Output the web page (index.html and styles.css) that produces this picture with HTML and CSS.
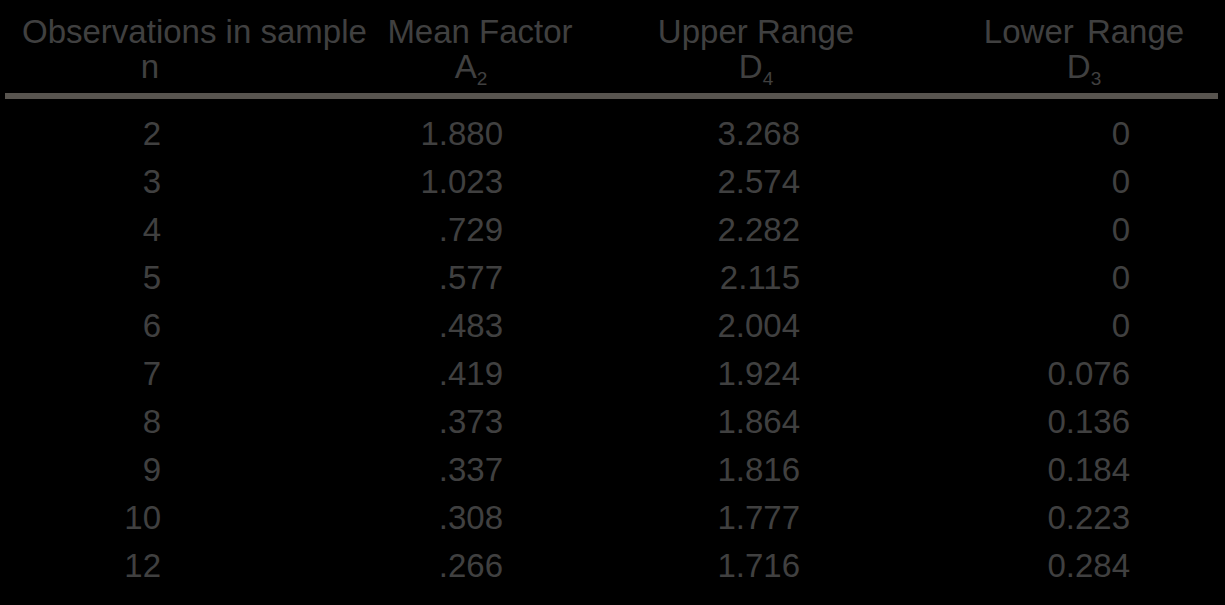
FILE: index.html
```html
<!DOCTYPE html>
<html>
<head>
<meta charset="utf-8">
<link rel="stylesheet" href="styles.css">
</head>
<body>
<div class="table">
  <div class="head">
    <div class="row hrow">
      <div class="cell c1 left"><span>Observations in sample</span></div>
      <div class="cell c2"><span>Mean Factor</span></div>
      <div class="cell c3"><span>Upper Range</span></div>
      <div class="cell c4"><span class="wide">Lower Range</span></div>
    </div>
    <div class="row hrow">
      <div class="cell c1"><span>n</span></div>
      <div class="cell c2 sym"><span>A<sub>2</sub></span></div>
      <div class="cell c3"><span>D<sub>4</sub></span></div>
      <div class="cell c4"><span>D<sub>3</sub></span></div>
    </div>
  </div>
  <div class="rule"></div>
  <div class="body">
    <div class="row drow"><div class="d d1">2</div><div class="d d2">1.880</div><div class="d d3">3.268</div><div class="d d4">0</div></div>
    <div class="row drow"><div class="d d1">3</div><div class="d d2">1.023</div><div class="d d3">2.574</div><div class="d d4">0</div></div>
    <div class="row drow"><div class="d d1">4</div><div class="d d2">.729</div><div class="d d3">2.282</div><div class="d d4">0</div></div>
    <div class="row drow"><div class="d d1">5</div><div class="d d2">.577</div><div class="d d3">2.115</div><div class="d d4">0</div></div>
    <div class="row drow"><div class="d d1">6</div><div class="d d2">.483</div><div class="d d3">2.004</div><div class="d d4">0</div></div>
    <div class="row drow"><div class="d d1">7</div><div class="d d2">.419</div><div class="d d3">1.924</div><div class="d d4">0.076</div></div>
    <div class="row drow"><div class="d d1">8</div><div class="d d2">.373</div><div class="d d3">1.864</div><div class="d d4">0.136</div></div>
    <div class="row drow"><div class="d d1">9</div><div class="d d2">.337</div><div class="d d3">1.816</div><div class="d d4">0.184</div></div>
    <div class="row drow"><div class="d d1">10</div><div class="d d2">.308</div><div class="d d3">1.777</div><div class="d d4">0.223</div></div>
    <div class="row drow"><div class="d d1">12</div><div class="d d2">.266</div><div class="d d3">1.716</div><div class="d d4">0.284</div></div>
  </div>
</div>
</body>
</html>
```
FILE: styles.css
```css
html, body {
  margin: 0;
  padding: 0;
  background: #000;
  overflow: hidden;
}
body {
  width: 1225px;
  height: 605px;
  font-family: "Liberation Sans", Arial, sans-serif;
  font-size: 33px;
  color: #404040;
}
.table {
  display: flex;
  flex-direction: column;
}
.head {
  padding-top: 14px;
}
.row {
  display: grid;
  grid-template-columns: 300px 360px 192px 1fr;
}
.hrow {
  height: 35px;
  line-height: 35px;
}
.cell {
  display: flex;
  justify-content: center;
  white-space: nowrap;
}
.cell.left {
  justify-content: flex-start;
  padding-left: 22px;
}
.cell.c4 {
  padding-left: 91px;
}
.cell.sym {
  padding-right: 18px;
}
.wide {
  word-spacing: 4px;
}
sub {
  font-size: 19px;
  vertical-align: -7px;
  line-height: 0;
}
.rule {
  margin: 9px 7px 0 5px;
  height: 6px;
  background: #58544f;
}
.body {
  padding-top: 11px;
}
.drow {
  height: 48px;
  line-height: 48px;
}
.d {
  text-align: right;
  white-space: nowrap;
}
.d1 { padding-right: 139px; }
.d2 { padding-right: 157px; }
.d3 { padding-right: 52px; }
.d4 { padding-right: 95px; }
```
